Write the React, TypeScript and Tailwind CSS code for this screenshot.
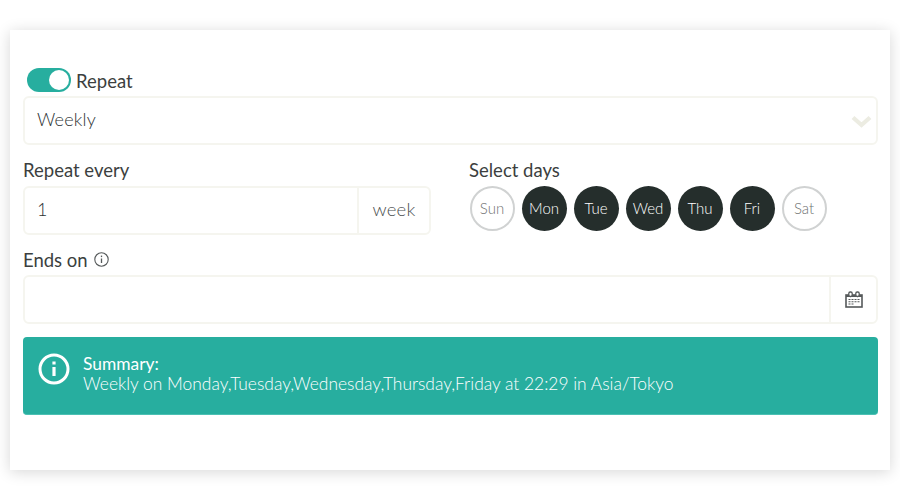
import React from 'react';

const days = [
  { name: 'Sun', on: false },
  { name: 'Mon', on: true },
  { name: 'Tue', on: true },
  { name: 'Wed', on: true },
  { name: 'Thu', on: true },
  { name: 'Fri', on: true },
  { name: 'Sat', on: false },
];

function CalendarIcon() {
  return (
    <svg width="18" height="17" viewBox="0 0 18 17" fill="none" stroke="#55595a">
      <rect x="1" y="4" width="16" height="12" strokeWidth="1.6" />
      <path d="M1 5h16" strokeWidth="2" />
      <rect x="3.8" y="1" width="3.4" height="4.5" rx="1.4" strokeWidth="1.3" fill="#fff" />
      <rect x="10.8" y="1" width="3.4" height="4.5" rx="1.4" strokeWidth="1.3" fill="#fff" />
      <path d="M3.5 8.5h11M3.5 10.8h11M3.5 13h6" strokeWidth="1.1" strokeDasharray="2 1" />
    </svg>
  );
}

export default function App() {
  return (
    <div className="h-[500px] w-[900px] bg-white pt-[30px] pl-[10px] font-['Lato','Liberation_Sans',sans-serif] text-[#3c3f40]">
      <div className="h-[440px] w-[880px] bg-white pl-[13px] pr-[12px] pt-[35px] shadow-[0_2px_14px_rgba(0,0,0,0.16)]">
        <div className="flex h-[31px] items-start pl-[4px] pt-[3px]">
          <div className="flex h-[24px] w-[44px] items-center justify-end rounded-full bg-[#27ae9f] pr-[2px]">
            <div className="h-[20px] w-[20px] rounded-full bg-white" />
          </div>
          <span className="ml-[5px] text-[18.5px] leading-[26px]">Repeat</span>
        </div>

        <div className="flex h-[49px] items-center justify-between rounded-[6px] border-2 border-[#f5f5ef] pl-[12px] pr-[4px]">
          <span className="mb-[2px] text-[18px] font-light tracking-[0.2px] text-[#2c3233]">Weekly</span>
          <svg width="21" height="13" viewBox="0 0 21 13" fill="none" stroke="#ecece2" className="mt-[1px]">
            <path d="M2 2.5l8.5 7.5 8.5-7.5" strokeWidth="4.2" />
          </svg>
        </div>

        <div className="mt-[12px] flex">
          <div className="w-[446px]">
            <div className="text-[18.5px] leading-[26px]">Repeat every</div>
            <div className="mt-[3px] flex h-[49px] w-[408px] rounded-[6px] border-2 border-[#f5f5ef]">
              <div className="flex flex-1 items-center pl-[12px] text-[18px] font-light text-[#2c3233]">
                <span className="mb-[2px]">1</span>
              </div>
              <div className="flex w-[72px] items-center justify-center border-l-2 border-[#f5f5ef] text-[18.5px] font-light tracking-[0.2px] text-[#4a4e4f]">
                <span className="mb-[2px]">week</span>
              </div>
            </div>
          </div>
          <div>
            <div className="text-[18.5px] leading-[26px]">Select days</div>
            <div className="mt-[3px] ml-[0.5px] flex gap-[7px]">
              {days.map((d) => (
                <div
                  key={d.name}
                  className={
                    d.on
                      ? 'flex h-[45px] w-[45px] items-center justify-center rounded-full bg-[#252e2c] text-[15px] font-light text-white'
                      : 'flex h-[45px] w-[45px] items-center justify-center rounded-full border-2 border-[#d0d2d2] text-[15px] font-light text-[#6f7272]'
                  }
                >
                  {d.name}
                </div>
              ))}
            </div>
          </div>
        </div>

        <div className="mt-[12px] flex h-[26px] items-center text-[18.5px]">
          <span className="mt-[1px]">Ends on</span>
          <svg className="ml-[6px] mb-[1px]" width="15" height="15" viewBox="0 0 15 15" fill="none" stroke="#55595a">
            <circle cx="7.5" cy="7.5" r="6.7" strokeWidth="1.1" />
            <path d="M7.5 6.5v4.5" strokeWidth="1.3" />
            <path d="M7.5 3.6v1.5" strokeWidth="1.3" />
          </svg>
        </div>

        <div className="mt-[2px] flex h-[49px] rounded-[6px] border-2 border-[#f5f5ef]">
          <div className="flex-1" />
          <div className="flex w-[47px] items-center justify-center border-l-2 border-[#f5f5ef]">
            <CalendarIcon />
          </div>
        </div>

        <div className="mt-[13px] flex h-[78px] items-start rounded-[4px] border-b border-[#4cc0b3] bg-[#27ae9f] pl-[15px] text-white">
          <svg className="mt-[16px]" width="32" height="32" viewBox="0 0 32 32" fill="none" stroke="#fff">
            <circle cx="16" cy="16" r="14" strokeWidth="3" />
            <path d="M16 14v9" strokeWidth="3.2" />
            <path d="M16 8.5v3" strokeWidth="3.2" />
          </svg>
          <div className="ml-[13px] mt-[17px] text-[17.4px] font-light leading-[20px]">
            <div className="font-normal">Summary:</div>
            <div>Weekly on Monday,Tuesday,Wednesday,Thursday,Friday at 22:29 in Asia/Tokyo</div>
          </div>
        </div>
      </div>
    </div>
  );
}
